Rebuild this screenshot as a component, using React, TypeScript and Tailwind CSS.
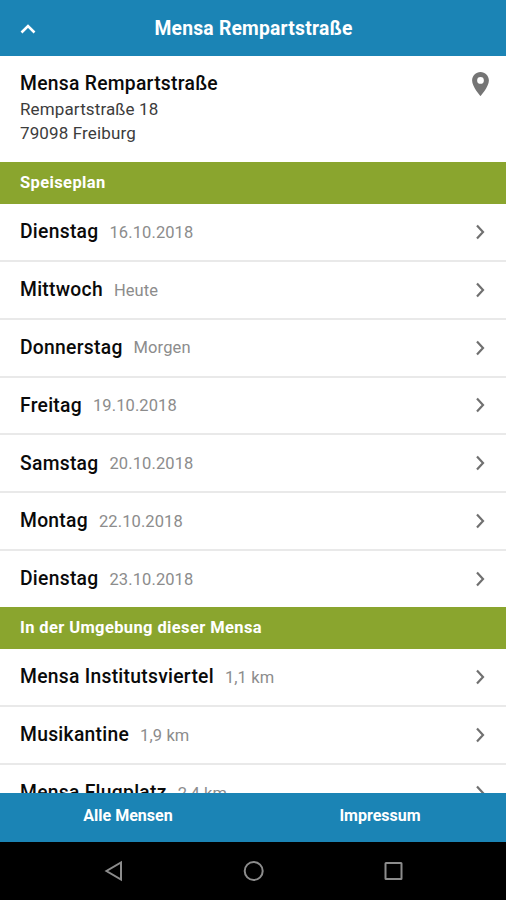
import React from 'react'

interface Row {
    title: string
    detail: string
}

const DAYS: Row[] = [
    { title: 'Dienstag', detail: '16.10.2018' },
    { title: 'Mittwoch', detail: 'Heute' },
    { title: 'Donnerstag', detail: 'Morgen' },
    { title: 'Freitag', detail: '19.10.2018' },
    { title: 'Samstag', detail: '20.10.2018' },
    { title: 'Montag', detail: '22.10.2018' },
    { title: 'Dienstag', detail: '23.10.2018' },
]

const NEARBY: Row[] = [
    { title: 'Mensa Institutsviertel', detail: '1,1 km' },
    { title: 'Musikantine', detail: '1,9 km' },
    { title: 'Mensa Flugplatz', detail: '2,4 km' },
]

const SectionTitle: React.FC<{ children: React.ReactNode }> = ({ children }) => (
    <h2 className="flex h-[41.5px] flex-none items-center bg-[#8aa52e] px-5 pt-px text-[16.5px] font-bold tracking-[0.38px] text-white">
        {children}
    </h2>
)

const ListRow: React.FC<Row> = ({ title, detail }) => (
    <button className="flex h-[57.85px] w-full flex-none items-center border-b-2 border-[#e9e9e9] pl-5 pr-[19px] text-left last:h-[56px] last:border-b-0">
        <span className="pt-[1.5px] text-[19.3px] font-medium tracking-[0.28px] text-[#0a0a0a]">{title}</span>
        <span className="ml-[11px] flex-1 pt-[2.5px] text-[16.5px] tracking-[0.1px] text-[#8c8c8c]">{detail}</span>
        <svg className="h-4 w-[14px]" viewBox="0 0 14 16" fill="none" stroke="#707070" strokeWidth="2.2">
            <path d="M4 1.500l6 6.500-6 6.500" />
        </svg>
    </button>
)

export default function App() {
    return (
        <div className="flex h-[900px] w-[506px] flex-col overflow-hidden bg-white font-['Roboto',sans-serif]">
            <header className="relative flex h-14 flex-none items-center justify-center bg-[#1b84b5] pl-px pt-0.5">
                <button className="absolute left-5 top-[21px]">
                    <svg className="h-4 w-4" viewBox="0 0 16 16" fill="none" stroke="#fff" strokeWidth="2.600">
                        <path d="M1.500 11.500L8 5l6.500 6.500" />
                    </svg>
                </button>
                <h1 className="text-[19.3px] font-bold tracking-[0.22px] text-white">Mensa Rempartstraße</h1>
            </header>

            <main className="min-h-0 flex-1 overflow-hidden">
                <div className="flex h-[106px] justify-between pl-5 pr-[17px] pt-4">
                    <address className="text-[17px] leading-[24.6px] not-italic tracking-[0.13px] text-[#3c3c3c]">
                        <div className="text-[19.3px] font-medium tracking-[0.28px] text-[#0a0a0a]">
                            Mensa Rempartstraße
                        </div>
                        <div>Rempartstraße 18</div>
                        <div>79098 Freiburg</div>
                    </address>
                    <svg className="h-6 w-[17px]" viewBox="5 2 14 20" fill="#757575">
                        <path d="M12 2C8.130 2 5 5.130 5 9c0 5.250 7 13 7 13s7-7.750 7-13c0-3.870-3.130-7-7-7zm0 9.800a2.800 2.800 0 110-5.600 2.800 2.800 0 010 5.600z" />
                    </svg>
                </div>
                <SectionTitle>Speiseplan</SectionTitle>
                <div className="pt-[0.5px]">
                    {DAYS.map((day) => (
                        <ListRow key={day.detail} {...day} />
                    ))}
                </div>
                <SectionTitle>In der Umgebung dieser Mensa</SectionTitle>
                <div className="pt-[0.5px]">
                    {NEARBY.map((mensa) => (
                        <ListRow key={mensa.title} {...mensa} />
                    ))}
                </div>
            </main>

            <footer className="flex-none">
                <nav className="grid h-[49px] grid-cols-2 bg-[#1b84b5] pb-[3px] pl-[2px] text-[16px] font-bold text-white">
                    <button>Alle Mensen</button>
                    <button>Impressum</button>
                </nav>
                {/* Android system buttons */}
                <div className="flex h-[58px] items-center justify-center bg-black">
                    <svg className="h-6 w-[304px]" viewBox="0 0 304 24" fill="none" stroke="#8c8c8c" strokeWidth="2">
                        <path d="M20 3.500v17L5.500 12z" />
                        <circle cx="152.700" cy="12" r="9" />
                        <rect x="284.500" y="4" width="16" height="16" rx="0.500" />
                    </svg>
                </div>
            </footer>
        </div>
    )
}
